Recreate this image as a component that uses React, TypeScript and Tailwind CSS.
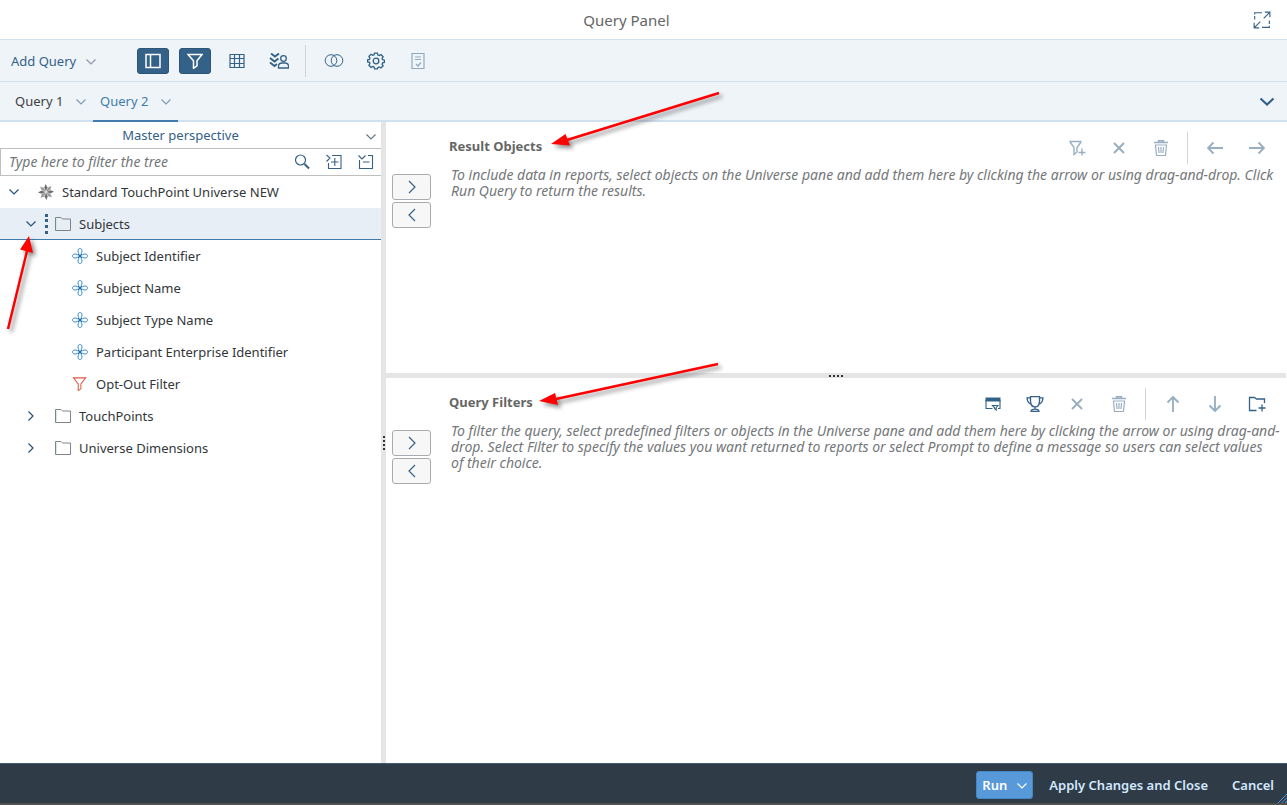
import type { ReactNode } from "react";
import clsx from "clsx";

type IconProps = { className?: string };

function Icon({ children, className = "size-4" }: { children: ReactNode; className?: string }) {
  return (
    <svg
      viewBox="0 0 16 16"
      fill="none"
      stroke="currentColor"
      strokeWidth="1"
      aria-hidden="true"
      className={clsx("shrink-0", className)}
    >
      {children}
    </svg>
  );
}

const ChevronDown = ({ className }: IconProps) => (
  <svg viewBox="0 0 10 6" fill="none" stroke="currentColor" strokeWidth="1.2" aria-hidden="true" className={clsx("h-[6px] w-[10px] shrink-0", className)}>
    <path d="M.5.5 5 5 9.5.5" />
  </svg>
);

const ArrowIcon = ({ className }: IconProps) => (
  <Icon className={clsx("size-4", className)}>
    <path d="M0 8h15M9.500 2.500 15 8l-5.500 5.500" strokeWidth="1.900" />
  </Icon>
);

const CloseIcon = () => (
  <Icon>
    <path d="m3 3 10 10M13 3 3 13" strokeWidth="2" />
  </Icon>
);

const TrashIcon = () => (
  <Icon>
    <path d="M1 2.500h14M5.500 2V.800h5V2" strokeWidth="1.500" />
    <path d="M2.500 5h11l-1 10.500h-9zM5.500 7l.5 6M8 7v6M10.500 7l-.5 6" strokeWidth="1.200" />
  </Icon>
);

const FilterIcon = () => (
  <Icon>
    <path d="M1 1.500h14l-5 6.300v5l-3.500 2.500V7.800z" strokeWidth="1.500" />
  </Icon>
);

const FilterAddIcon = () => (
  <svg viewBox="0 0 18 16" fill="none" stroke="currentColor" aria-hidden="true" className="h-4 w-[18px]">
    <path d="M1.500 1.500h12M2 2l4 5.500v7l3-2.500V7.500l4-5.500M14 8.500v7M10.500 12.500h7" strokeWidth="1.400" />
  </svg>
);

const PanelIcon = () => (
  <Icon>
    <path d="M1 1.500h14v13H1zM5.500 1.500v13" strokeWidth="1.500" />
  </Icon>
);

const GridIcon = () => (
  <Icon>
    <path d="M1 1.500h14v13H1zM1 5.500h14M1 10.500h14M5.500 1.500v13M10.500 1.500v13" strokeWidth="1.200" />
  </Icon>
);

const RanksIcon = () => (
  <svg viewBox="0 0 20 16" fill="none" stroke="currentColor" aria-hidden="true" className="h-4 w-5">
    <path d="m2 .5 4 3 4-3M1 5l4.500 3.500L9.500 5.500M1 9.500l4.500 3.500L8 11" strokeWidth="1.900" />
    <circle cx="14.500" cy="5.500" r="2.800" strokeWidth="1.300" />
    <path d="M9.500 15v-1.500c0-2 1.500-3.500 3.500-3.500h3c2 0 3.500 1.500 3.500 3.500V15z" strokeWidth="1.300" />
  </svg>
);

const CombineIcon = () => (
  <svg viewBox="0 0 20 16" fill="none" stroke="currentColor" aria-hidden="true" className="h-4 w-5">
    <circle cx="7" cy="7.500" r="5.800" />
    <circle cx="13" cy="7.500" r="5.800" />
  </svg>
);

const GearIcon = () => (
  <Icon className="size-[18px]">
    <path
      d="M6.700 1h2.600l.4 1.700 1.200.5 1.500-.9 1.900 1.900-.9 1.500.5 1.200 1.600.4v1.900l-1.600.4-.5 1.200.9 1.500-1.900 1.900-1.500-.9-1.200.5L9.300 15H6.700l-.4-1.700-1.200-.5-1.500.9-1.900-1.900.9-1.500-.5-1.200L.5 8.900V7l1.600-.4.5-1.200-.9-1.500 1.900-1.900 1.500.9 1.200-.5z"
      strokeWidth="1.200"
    />
    <circle cx="8" cy="8" r="2.500" strokeWidth="1.200" />
  </Icon>
);

const ScriptIcon = () => (
  <Icon>
    <path d="M2 .500h12v15H2zM5 4h6M5 6.500h6M6 11l2 2 3-3.500" strokeWidth="1.200" />
  </Icon>
);

const FullScreenIcon = () => (
  <Icon className="size-[18px]">
    <path d="M1.500 7.500V4.500M1.500 3V1.500H8M14.500 8.500v3M14.500 13v1.500H8M9.500 6.500 15 1M10.500 1H15v4.500M6.500 9.500 1 15M1 10.500V15h4.500" />
  </Icon>
);

const SearchIcon = () => (
  <Icon>
    <circle cx="6.500" cy="6" r="5" strokeWidth="1.200" />
    <path d="m10.500 10 4.500 4.500" strokeWidth="2" />
  </Icon>
);

const ExpandIcon = () => (
  <Icon>
    <path d="M6 1.500h9v13H2.500V9M.500 1l3.500 3-3.500 3.500M8.800 4v8M5 8h7.500" strokeWidth="1.100" />
  </Icon>
);

const CollapseIcon = () => (
  <Icon>
    <path d="M10 1.500h4.500v13h-13V6M.500 1.500 4 5l3.500-3.500M5 8h6.500" strokeWidth="1.100" />
  </Icon>
);

const PromptIcon = () => (
  <Icon>
    <path d="M.500 1.500h15v4H.500z" fill="currentColor" stroke="none" />
    <path d="M1 4v8.500h6.500M15 4v8.500h-2M7.500 9.500h5.500l-1.800 2v2.500l-1.700-1.500v-1z" strokeWidth="1.100" />
  </Icon>
);

const TrophyIcon = () => (
  <Icon className="size-[18px]">
    <path
      d="M4 1.500h8v4c0 3-1.500 5-4 5s-4-2-4-5zM4 2.500H1c0 3 1 5 3.500 5.500M12 2.500h3c0 3-1 5-3.500 5.500M8 10.500V13M4.500 14.500c0-1.500 1.500-2 3.500-2s3.500.5 3.500 2z"
      strokeWidth="1.200"
    />
  </Icon>
);

const FolderAddIcon = () => (
  <svg viewBox="0 0 18 16" fill="none" stroke="currentColor" aria-hidden="true" className="h-4 w-[18px]">
    <path d="M8.500 14.500h-7v-13h5l2 1.500h8V7M14 8.500v7M10.500 12h7" strokeWidth="1.300" />
  </svg>
);

const FolderIcon = () => (
  <Icon>
    <path d="M.500 14.500v-13h5.500l1.500 1.500h8v11.500z" stroke="#808487" />
    <path d="M1.500 13.500v-11" stroke="#c9f0dc" />
  </Icon>
);

const UniverseIcon = () => (
  <Icon>
    {[0, 45, 90, 135, 180, 225, 270, 315].map((angle) => (
      <path
        key={angle}
        d="M8 7.500 6.300 3.500 7.500 0l2 3.500z"
        fill={angle % 90 ? "#9a9a9a" : "#6f6f6f"}
        stroke="none"
        transform={`rotate(${angle} 8 8)`}
      />
    ))}
  </Icon>
);

const DimensionIcon = () => (
  <Icon>
    {[0, 90, 180, 270].map((angle) => (
      <path
        key={angle}
        d="M8 7.500C6.800 6 6 4.500 6 3 6 1.500 6.800.5 8 .5s2 1 2 2.500c0 1.500-.8 3-2 4.500z"
        stroke="#3b8fcf"
        transform={`rotate(${angle} 8 8)`}
      />
    ))}
    <path d="m6 6 4 4M10 6l-4 4" stroke="#1c6fb8" />
  </Icon>
);

const OptionFilterIcon = () => (
  <Icon className="h-[14px] w-4">
    <path d="M.500 1h14L9 8v5.500L6 15.500V8z" stroke="#dd5a44" strokeWidth="1.200" />
  </Icon>
);

function ToolButton({ label, active, disabled, children }: { label: string; active?: boolean; disabled?: boolean; children: ReactNode }) {
  return (
    <button
      type="button"
      aria-label={label}
      disabled={disabled}
      className={clsx(
        "flex h-[26px] w-8 items-center justify-center rounded-[3px]",
        active ? "border border-[#2c5578] bg-[#346187] text-white" : "text-[#346187]",
        disabled && "opacity-50",
      )}
    >
      {children}
    </button>
  );
}

const Separator = ({ className }: IconProps) => <span className={clsx("h-8 w-px bg-[#ccd3d9]", className)} />;

function Tab({ label, selected }: { label: string; selected?: boolean }) {
  return (
    <button
      type="button"
      role="tab"
      aria-selected={!!selected}
      className={clsx(
        "-mb-0.5 flex w-[85px] items-center justify-between border-b-2 px-[7px]",
        selected ? "border-[#427cac] text-[#427cac]" : "border-transparent text-[#3f3f3f]",
      )}
    >
      {label}
      <ChevronDown className="mt-0.5 text-[#7d9cb8]" />
    </button>
  );
}

type Kind = "folder" | "dimension" | "filter";

const nodes: { label: string; kind: Kind; open?: boolean }[] = [
  { label: "Subjects", kind: "folder", open: true },
  { label: "Subject Identifier", kind: "dimension" },
  { label: "Subject Name", kind: "dimension" },
  { label: "Subject Type Name", kind: "dimension" },
  { label: "Participant Enterprise Identifier", kind: "dimension" },
  { label: "Opt-Out Filter", kind: "filter" },
  { label: "TouchPoints", kind: "folder" },
  { label: "Universe Dimensions", kind: "folder" },
];

function Tree() {
  return (
    <ul role="tree" className="text-[#32363a]">
      <li role="treeitem" aria-expanded="true" className="flex h-8 items-center pl-[9px]">
        <ChevronDown className="mr-[19px] text-[#24507a]" />
        <UniverseIcon />
        <span className="ml-2">Standard TouchPoint Universe NEW</span>
      </li>
      {nodes.map(({ label, kind, open }) => (
        <li
          key={label}
          role="treeitem"
          aria-selected={!!open}
          className={clsx(
            "flex h-8 items-center",
            kind === "folder" ? "pl-[26px]" : "pl-[72px]",
            open && "border-b border-[#427cac] bg-[#e7eef6]",
          )}
        >
          {kind === "folder" && (
            <>
              <ChevronDown className={clsx("text-[#24507a]", !open && "-rotate-90")} />
              <span className="flex w-[19px] justify-center">
                {open && <span className="ml-0.5 h-5 border-l-3 border-dotted border-[#346187]" />}
              </span>
              <FolderIcon />
            </>
          )}
          {kind === "dimension" && <DimensionIcon />}
          {kind === "filter" && <OptionFilterIcon />}
          <span className="ml-2">{label}</span>
        </li>
      ))}
    </ul>
  );
}

function QueryPane({ title, hint, tools, className }: { title: string; hint: string; tools: ReactNode; className?: string }) {
  return (
    <section className={clsx("flex pl-[6px]", className)}>
      <div className="flex w-[39px] shrink-0 flex-col gap-0.5 pt-[52px]">
        {["Add", "Remove"].map((action) => (
          <button
            key={action}
            type="button"
            aria-label={`${action}: ${title}`}
            className="flex h-[26px] items-center justify-center rounded-[3px] border border-[#a9abad] bg-[#f7f7f7] text-[#346187]"
          >
            <Icon>
              <path d={action === "Add" ? "m5 2 6 6-6 6" : "M11 2 5 8l6 6"} strokeWidth="1.200" />
            </Icon>
          </button>
        ))}
      </div>
      <div className="ml-[18px] flex-1">
        <div className="flex items-center justify-between pt-[10px] pr-[13px]">
          <h2 className="pb-1 font-bold text-[#666]">{title}</h2>
          <div className="flex items-center gap-[10px]">{tools}</div>
        </div>
        <p className="mt-[3px] ml-0.5 text-sm leading-4 text-[#74777a] italic">{hint}</p>
      </div>
    </section>
  );
}

// Red pointer arrows laid over the window
function Pointers() {
  return (
    <svg aria-hidden="true" className="pointer-events-none absolute top-0 left-0 h-[400px] w-[760px] overflow-visible">
      <g fill="#f00" stroke="#f00" className="drop-shadow-[3px_3px_2px_rgba(0,0,0,0.45)]">
        <path d="M719 93 567 140M718 364 556 399M8 329 27 251" strokeWidth="2.500" />
        <path d="M551 144 565.500 134 570 145.500zM539 401 555 393 558 405zM29 236 20 249.500 33 253z" stroke="none" />
      </g>
    </svg>
  );
}

export default function App() {
  return (
    <div className="relative flex min-h-screen flex-col bg-white font-['Noto_Sans','Open_Sans',sans-serif] text-[13px] leading-5">
      <header className="flex h-10 items-center border-b border-[#d1e0ee] px-4">
        <h1 className="flex-1 pr-4 text-center text-[15px] text-[#666]">Query Panel</h1>
        <button type="button" aria-label="Full screen" className="text-[#346187]">
          <FullScreenIcon />
        </button>
      </header>

      <div className="flex h-[42px] items-center gap-[10px] border-b border-[#d1e0ee] bg-[#eff4f9] pl-[11px]">
        <button type="button" className="flex w-[116px] items-center gap-[10px] text-[#346187]">
          Add Query
          <ChevronDown className="mt-0.5 text-[#8a98a5]" />
        </button>
        <ToolButton label="Universe pane" active><PanelIcon /></ToolButton>
        <ToolButton label="Filters pane" active><FilterIcon /></ToolButton>
        <ToolButton label="Data preview"><GridIcon /></ToolButton>
        <ToolButton label="Scope of analysis"><RanksIcon /></ToolButton>
        <Separator className="mr-0.5" />
        <ToolButton label="Combined query"><CombineIcon /></ToolButton>
        <ToolButton label="Query properties"><GearIcon /></ToolButton>
        <ToolButton label="View script" disabled><ScriptIcon /></ToolButton>
      </div>

      <div role="tablist" className="flex h-10 border-b-2 border-[#d1e0ee] bg-[#eff4f9] pl-2">
        <Tab label="Query 1" />
        <Tab label="Query 2" selected />
        <button type="button" aria-label="All queries" className="mr-3 ml-auto text-[#346187]">
          <Icon>
            <path d="m1.500 5.500 6.500 6 6.500-6" strokeWidth="2.200" />
          </Icon>
        </button>
      </div>

      <main className="flex flex-1 pr-px">
        <aside className="w-[381px] shrink-0">
          <div className="relative flex h-[26px] items-center">
            <select
              aria-label="Perspective"
              className="h-full w-full appearance-none pr-5 text-[#346187] [text-align-last:center]"
            >
              <option>Master perspective</option>
            </select>
            <ChevronDown className="pointer-events-none absolute top-[12px] right-[5px] text-[#6a7680]" />
          </div>
          <div className="flex h-7 items-center gap-4 border border-r-0 border-[#bfbfbf] pr-[7px] pl-2 text-[#346187]">
            <input
              type="text"
              aria-label="Filter the tree"
              placeholder="Type here to filter the tree"
              className="min-w-0 flex-1 text-sm italic outline-none placeholder:text-[#74777a]"
            />
            <button type="button" aria-label="Search"><SearchIcon /></button>
            <button type="button" aria-label="Expand all"><ExpandIcon /></button>
            <button type="button" aria-label="Collapse all"><CollapseIcon /></button>
          </div>
          <Tree />
        </aside>

        <div className="flex w-[5px] shrink-0 items-center justify-center bg-[#e5e5e5]">
          <span className="h-[14px] border-l-2 border-dotted border-[#333]" />
        </div>

        <div className="flex min-w-0 flex-1 flex-col">
          <QueryPane
            title="Result Objects"
            className="min-h-[251px]"
            hint="To include data in reports, select objects on the Universe pane and add them here by clicking the arrow or using drag-and-drop. Click Run Query to return the results."
            tools={
              <>
                <ToolButton label="Add filter" disabled><FilterAddIcon /></ToolButton>
                <ToolButton label="Remove" disabled><CloseIcon /></ToolButton>
                <ToolButton label="Remove all" disabled><TrashIcon /></ToolButton>
                <Separator className="mr-px" />
                <ToolButton label="Move left" disabled><ArrowIcon className="rotate-180" /></ToolButton>
                <ToolButton label="Move right" disabled><ArrowIcon /></ToolButton>
              </>
            }
          />
          <div className="flex h-[5px] items-center justify-center bg-[#e5e5e5]">
            <span className="w-[14px] border-t-2 border-dotted border-[#333]" />
          </div>
          <QueryPane
            title="Query Filters"
            className="flex-1"
            hint={
              "To filter the query, select predefined filters or objects in the Universe pane and add them here by clicking the arrow or using drag-and-drop. Select Filter to specify the values you want returned to reports or select Prompt to define a message so users can select values of\u00a0their choice."
            }
            tools={
              <>
                <ToolButton label="Add prompt"><PromptIcon /></ToolButton>
                <ToolButton label="Add ranking"><TrophyIcon /></ToolButton>
                <ToolButton label="Remove" disabled><CloseIcon /></ToolButton>
                <ToolButton label="Remove all" disabled><TrashIcon /></ToolButton>
                <Separator className="mr-px" />
                <ToolButton label="Move up" disabled><ArrowIcon className="-rotate-90" /></ToolButton>
                <ToolButton label="Move down" disabled><ArrowIcon className="rotate-90" /></ToolButton>
                <ToolButton label="Nest filters"><FolderAddIcon /></ToolButton>
              </>
            }
          />
        </div>
      </main>

      <footer className="relative flex h-[42px] items-center justify-end border-t border-b-2 border-t-[#435a70] border-b-[#4f4f4f] bg-[#2f3c48] pt-0.5 pr-[13px] font-semibold text-[#d3e8fd]">
        <button type="button" className="flex h-7 w-[57px] items-center justify-between rounded-[3px] border border-[#4287c4] bg-[#5899da] px-[5px] text-white">
          Run
          <ChevronDown className="mt-0.5" />
        </button>
        <button type="button" className="ml-4">Apply Changes and Close</button>
        <button type="button" className="ml-6">Cancel</button>
        <svg viewBox="0 0 9 9" aria-hidden="true" stroke="#5899da" className="absolute right-0 bottom-0 size-[9px]">
          <path d="M0 9 9 0M3.500 9 9 3.500M7 9l2-2" />
        </svg>
      </footer>

      <Pointers />
    </div>
  );
}
